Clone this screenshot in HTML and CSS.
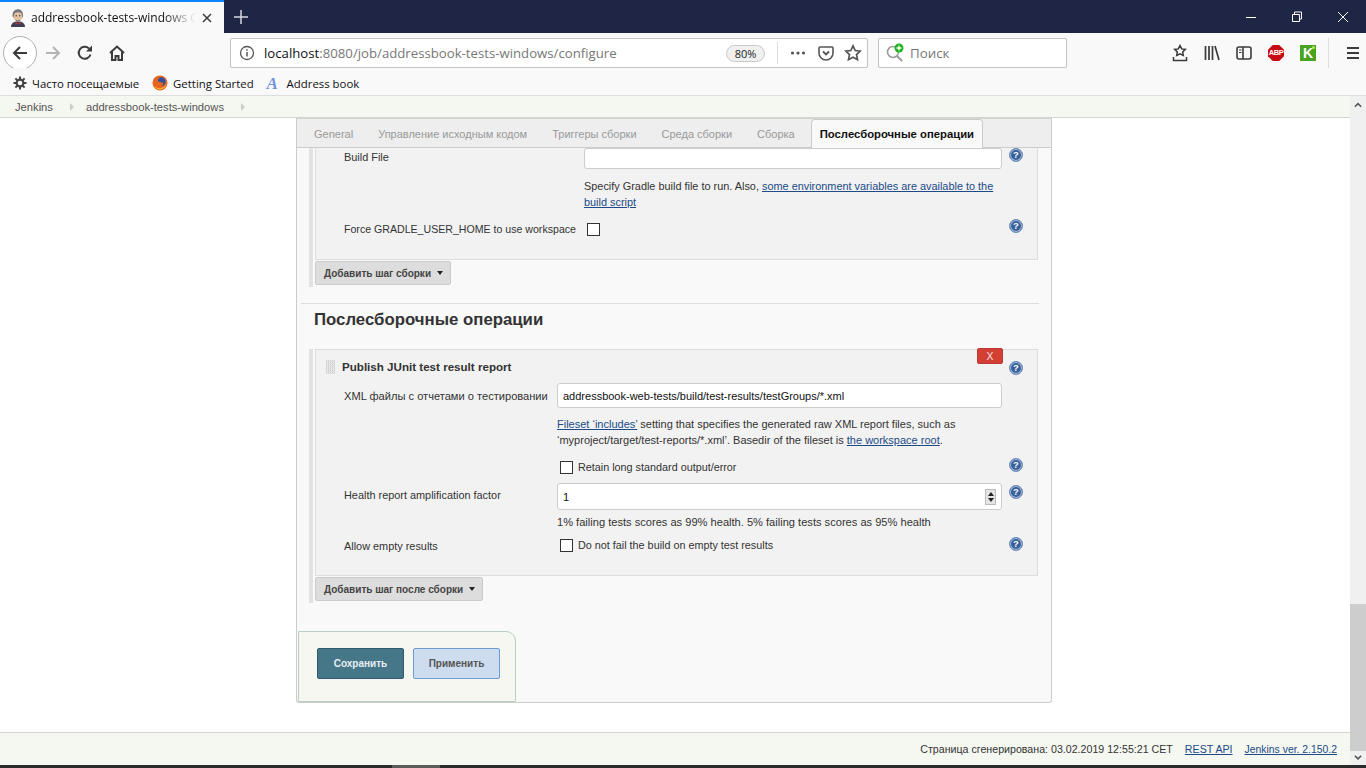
FILE: index.html
```html
<!DOCTYPE html>
<html>
<head>
  <meta charset="utf-8">
  <title>addressbook-tests-windows Config</title>
  <link rel="stylesheet" href="styles.css">
</head>
<body>
  <!-- browser window -->
  <div class="tabstrip">
    <div class="tab">
      <svg class="favicon" width="16" height="18" viewBox="0 0 16 18"><path d="M1 18c0-3.500 2.500-5.500 7-5.500s7 2 7 5.500z" fill="#3c3f55"/><path d="M5.500 12.500L8 15l2.500-2.500v3L8 15l-2.500.5z" fill="#c23b35"/><ellipse cx="8" cy="6.500" rx="4.800" ry="6" fill="#e3c1a3"/><path d="M3.200 9C2 6 2.500 2.500 5 1c2-1 4.500-1 6 .2 2 1.600 2.500 5 1.800 7.800-.8-1.500-.8-3.500-1.600-5-1.600-1-4.700-1-6.400 0-.8 1.500-.8 3.500-1.600 5z" fill="#77757a"/><path d="M5.500 10.500c1.600 1 3.400 1 5 0-.3 1.500-1 2.200-2.500 2.200s-2.200-.7-2.500-2.200z" fill="#8d8078"/><circle cx="6.200" cy="6.800" r=".7" fill="#333"/><circle cx="9.800" cy="6.800" r=".7" fill="#333"/></svg>
      <span class="tab-title">addressbook-tests-windows Configuration</span>
      <svg class="tab-close" width="10" height="10" viewBox="0 0 10 10"><path d="M1 1l8 8M9 1L1 9" stroke="#3a3a3a" stroke-width="1.500"/></svg>
    </div>
    <svg class="new-tab" width="14" height="14" viewBox="0 0 14 14"><path d="M7 0v14M0 7h14" stroke="#d7d8df" stroke-width="1.500"/></svg>
    <div class="window-btns">
      <svg width="12" height="12" viewBox="0 0 12 12"><path d="M1 6.500h10" stroke="#fff"/></svg>
      <svg width="12" height="12" viewBox="0 0 12 12"><path d="M3.500 3V1h7v7H8.500M1.500 3.500h7v7h-7z" fill="none" stroke="#fff"/></svg>
      <svg width="12" height="12" viewBox="0 0 12 12"><path d="M1 1l10 10M11 1L1 11" stroke="#fff"/></svg>
    </div>
  </div>

  <div class="toolbar">
    <div class="back-btn">
      <svg width="16" height="16" viewBox="0 0 16 16"><path d="M15 8H2M8 2L2 8l6 6" fill="none" stroke="#3b3b3b" stroke-width="2"/></svg>
    </div>
    <div class="tool-btn fwd">
      <svg width="16" height="16" viewBox="0 0 16 16"><path d="M1 8h13M8 2l6 6-6 6" fill="none" stroke="#b4b4b4" stroke-width="2"/></svg>
    </div>
    <div class="tool-btn">
      <svg width="16" height="16" viewBox="0 0 16 16"><path d="M13.500 9.500A6 6 0 1 1 12 3.500" fill="none" stroke="#3b3b3b" stroke-width="2"/><path d="M9 6.500h6v-6z" fill="#3b3b3b"/></svg>
    </div>
    <div class="tool-btn">
      <svg width="16" height="16" viewBox="0 0 16 16"><path d="M1 8l7-6.500L15 8M3 7v8h3.500v-4h3v4H13V7" fill="none" stroke="#3b3b3b" stroke-width="2"/></svg>
    </div>
    <div class="urlbar">
      <svg width="16" height="16" viewBox="0 0 16 16"><circle cx="8" cy="8" r="6.500" fill="none" stroke="#555" stroke-width="1.300"/><path d="M8 7v4.500M8 4.200v1.600" stroke="#555" stroke-width="1.500"/></svg>
      <span class="url"><b>localhost</b>:8080/job/addressbook-tests-windows/configure</span>
      <span class="zoom-pill">80%</span>
      <span class="url-sep"></span>
      <svg width="16" height="16" viewBox="0 0 16 16"><circle cx="2.500" cy="8" r="1.600" fill="#555"/><circle cx="8" cy="8" r="1.600" fill="#555"/><circle cx="13.500" cy="8" r="1.600" fill="#555"/></svg>
      <svg width="16" height="16" viewBox="0 0 16 16"><path d="M2 2h12a1 1 0 0 1 1 1v5a7 7 0 0 1-14 0V3a1 1 0 0 1 1-1z" fill="none" stroke="#555" stroke-width="1.600"/><path d="M5 6.500l3 3 3-3" fill="none" stroke="#555" stroke-width="1.800"/></svg>
      <svg width="18" height="18" viewBox="0 0 18 18"><path d="M9 1.800l2.200 4.700 5 .6-3.700 3.500 1 5.100L9 13.200l-4.500 2.500 1-5.100L1.800 7.100l5-.6z" fill="none" stroke="#555" stroke-width="1.700"/></svg>
    </div>
    <div class="searchbar">
      <svg width="22" height="20" viewBox="0 0 22 20"><circle cx="8" cy="9" r="5.500" fill="none" stroke="#999" stroke-width="1.500"/><path d="M12 13l5 5" stroke="#999" stroke-width="1.800"/><circle cx="14" cy="5" r="4.500" fill="#1fb31f"/><path d="M14 2.500v5M11.500 5h5" stroke="#fff" stroke-width="1.300"/></svg>
      <span>Поиск</span>
    </div>
    <div class="right-tools">
      <svg width="16" height="18" viewBox="0 0 16 18"><path d="M8 1.500l1.700 3.400 3.600.5-2.600 2.500.6 3.600L8 9.800l-3.300 1.700.6-3.600-2.600-2.500 3.600-.5z" fill="none" stroke="#3b3b3b" stroke-width="1.500"/><path d="M1.500 13v3.500h13V13" fill="none" stroke="#3b3b3b" stroke-width="1.500"/></svg>
      <svg width="16" height="16" viewBox="0 0 16 16"><path d="M1.500 1v14M5 1v14M8.500 1v14M11 1l4 14" stroke="#3b3b3b" stroke-width="1.700" fill="none"/></svg>
      <svg width="16" height="16" viewBox="0 0 16 16"><rect x="1" y="2" width="14" height="12" rx="2" fill="none" stroke="#3b3b3b" stroke-width="1.600"/><path d="M7 2v12" stroke="#3b3b3b" stroke-width="1.600"/><path d="M3 5h2.500M3 7.500h2.500" stroke="#3b3b3b"/></svg>
      <span class="abp">ABP</span>
      <span class="ext-green">K</span>
      <span class="tools-sep"></span>
      <svg class="burger" width="14" height="14" viewBox="0 0 14 14"><path d="M1 2h12M1 7h12M1 12h12" stroke="#3b3b3b" stroke-width="1.800"/></svg>
    </div>
  </div>

  <div class="bookmarks">
    <span class="bookmark">
      <svg width="14" height="14" viewBox="0 0 14 14"><circle cx="7" cy="7" r="3.400" fill="none" stroke="#444" stroke-width="2.200"/><path d="M7 .5v2.500M7 11v2.500M.5 7H3M11 7h2.500M2.400 2.400l1.800 1.800M9.800 9.800l1.800 1.800M11.600 2.400L9.800 4.200M4.200 9.800l-1.800 1.800" stroke="#444" stroke-width="2"/></svg>
      Часто посещаемые
    </span>
    <span class="bookmark">
      <svg width="16" height="16" viewBox="0 0 16 16"><circle cx="8" cy="8" r="7.500" fill="#e8651c"/><circle cx="9" cy="6.800" r="4.600" fill="#2f4fa3"/><path d="M.8 8C1 4 3 2 4.500 1.500L4 4c1.500-1.500 3.500-1.500 4.500-1C6 3.500 5.500 5 6 6c1 1.500 3.500 1 5 1.500 1 2-1 4.500-3.500 4.500C4 12 2 10 1.500 7z" fill="#e8651c"/><path d="M1.500 11c2 3.500 7 4.500 10 2.500 2-1.300 3-3.500 3-5.500-1 3-3.500 5-6.500 5-2.500 0-5-.5-6.500-2z" fill="#f9b233"/></svg>
      Getting Started
    </span>
    <span class="bookmark">
      <span class="book-a">A</span>
      Address book
    </span>
  </div>

  <div class="page">
    <div class="page-main">
      <div class="breadcrumbs">
        <a>Jenkins</a>
        <span class="crumb-arrow"></span>
        <a>addressbook-tests-windows</a>
        <span class="crumb-arrow"></span>
      </div>

      <div class="canvas">
        <div class="panel">
          <div class="config-tabs">
            <a>General</a>
            <a>Управление исходным кодом</a>
            <a>Триггеры сборки</a>
            <a>Среда сборки</a>
            <a>Сборка</a>
            <a class="active">Послесборочные операции</a>
          </div>

          <div class="section">
            <div class="block block-build">
              <div class="row row-buildfile">
                <label>Build File</label>
                <input class="text-input" type="text">
                <span class="help">?</span>
              </div>
              <div class="row row-desc-gradle">
                <span></span>
                <div class="desc">Specify Gradle build file to run. Also, <a href="#">some environment variables are available to the build script</a></div>
              </div>
              <div class="row row-force">
                <label>Force GRADLE_USER_HOME to use workspace</label>
                <span class="check-line"><span class="checkbox"></span></span>
                <span class="help">?</span>
              </div>
            </div>
            <div class="add-btn">Добавить шаг сборки <i class="caret"></i></div>
          </div>

          <hr class="divider">
          <h2>Послесборочные операции</h2>

          <div class="section">
            <div class="block block-post">
              <button class="delete-btn">X</button>
              <div class="row row-title">
                <div class="step-title"><span class="grip"></span>Publish JUnit test result report</div>
                <span></span>
                <span class="help">?</span>
              </div>
              <div class="row row-xml">
                <label>XML файлы с отчетами о тестировании</label>
                <input class="text-input" type="text" value="addressbook-web-tests/build/test-results/testGroups/*.xml">
                <span></span>
              </div>
              <div class="row row-desc-files">
                <span></span>
                <div class="desc"><a href="#">Fileset ‘includes’</a> setting that specifies the generated raw XML report files, such as ‘myproject/target/test-reports/*.xml’. Basedir of the fileset is <a href="#">the workspace root</a>.</div>
              </div>
              <div class="row row-retain">
                <span></span>
                <span class="check-line"><span class="checkbox"></span>Retain long standard output/error</span>
                <span class="help">?</span>
              </div>
              <div class="row row-health">
                <label>Health report amplification factor</label>
                <div class="number-input">
                  <input type="text" value="1">
                  <span class="spinner"><i class="up"></i><i class="down"></i></span>
                </div>
                <span class="help">?</span>
              </div>
              <div class="row row-desc-health">
                <span></span>
                <div class="desc">1% failing tests scores as 99% health. 5% failing tests scores as 95% health</div>
              </div>
              <div class="row row-empty">
                <label>Allow empty results</label>
                <span class="check-line"><span class="checkbox"></span>Do not fail the build on empty test results</span>
                <span class="help">?</span>
              </div>
            </div>
            <div class="add-btn">Добавить шаг после сборки <i class="caret"></i></div>
          </div>

          <div class="save-bar">
            <button class="btn-save">Сохранить</button>
            <button class="btn-apply">Применить</button>
          </div>
        </div>
      </div>

      <div class="footer">
        <span>Страница сгенерирована: 03.02.2019 12:55:21 CET</span>
        <a href="#">REST API</a>
        <a class="version" href="#">Jenkins ver. 2.150.2</a>
      </div>
    </div>

    <div class="scrollbar">
      <svg width="10" height="7" viewBox="0 0 10 7"><path d="M1 6l4-4 4 4" fill="none" stroke="#555" stroke-width="2"/></svg>
      <div class="scroll-track"><div class="scroll-thumb"></div></div>
      <svg width="10" height="7" viewBox="0 0 10 7"><path d="M1 1l4 4 4-4" fill="none" stroke="#555" stroke-width="2"/></svg>
    </div>
  </div>
  <div class="bottom-strip"><span></span></div>
</body>
</html>
```

FILE: styles.css
```css
* {
  box-sizing: border-box;
}

html, body {
  margin: 0;
  height: 768px;
  overflow: hidden;
}

body {
  display: flex;
  flex-direction: column;
  font-family: "Liberation Sans", Arial, sans-serif;
  font-size: 10.9px;
  color: #333;
  background: #fff;
}

a {
  color: #204a87;
}

/* browser window */
.tabstrip {
  height: 33px;
  flex: none;
  display: flex;
  align-items: center;
  background: #1f2544;
}

.tab {
  width: 224px;
  height: 33px;
  display: flex;
  align-items: center;
  padding-left: 10px;
  background: #f9f9fa;
  border-top: 2px solid #0a84ff;
  font-family: "Open Sans", sans-serif;
  font-size: 12px;
  color: #111;
}

.favicon {
  flex: none;
}

.tab-title {
  width: 165px;
  margin-left: 5px;
  overflow: hidden;
  white-space: nowrap;
  -webkit-mask-image: linear-gradient(to right, #000 80%, transparent);
  mask-image: linear-gradient(to right, #000 80%, transparent);
}

.tab-close {
  margin-left: 6px;
}

.new-tab {
  margin-left: 10px;
}

.window-btns {
  margin-left: auto;
  width: 104px;
  margin-right: 17px;
  display: flex;
  justify-content: space-between;
}

.toolbar {
  height: 35px;
  flex: none;
  display: flex;
  align-items: center;
  padding: 5px 0 0 3px;
  background: #f9f9fa;
}

.back-btn {
  width: 34px;
  height: 34px;
  flex: none;
  display: flex;
  align-items: center;
  justify-content: center;
  background: #fff;
  border: 1px solid #b1b1b1;
  border-radius: 50%;
}

.tool-btn {
  width: 32px;
  flex: none;
  display: flex;
  justify-content: center;
}

.urlbar {
  width: 638px;
  height: 30px;
  margin-left: 97px;
  flex: none;
  display: flex;
  align-items: center;
  padding: 0 5px 0 8px;
  background: #fff;
  border: 1px solid #c4c4c4;
  border-radius: 2px;
  box-shadow: 0 1px 1px rgba(0, 0, 0, 0.1);
}

.url {
  margin-left: 9px;
  font-family: "Open Sans", sans-serif;
  font-size: 13.2px;
  color: #777;
  white-space: nowrap;
}

.url b {
  font-weight: normal;
  color: #111;
}

.zoom-pill {
  margin-left: auto;
  width: 39px;
  height: 17px;
  text-align: center;
  font-family: "Open Sans", sans-serif;
  font-size: 11px;
  line-height: 15px;
  color: #222;
  background: #f0f0f0;
  border: 1px solid #c9c9c9;
  border-radius: 9px;
}

.url-sep {
  width: 1px;
  height: 22px;
  margin: 0 12px;
  background: #ddd;
}

.urlbar svg + svg {
  margin-left: 12px;
}

.urlbar > svg:last-child {
  margin-left: 10px;
}

.searchbar {
  width: 189px;
  height: 30px;
  margin-left: 10px;
  flex: none;
  display: flex;
  align-items: center;
  padding-left: 6px;
  background: #fff;
  border: 1px solid #c4c4c4;
  border-radius: 2px;
  box-shadow: 0 1px 1px rgba(0, 0, 0, 0.1);
  font-family: "Open Sans", sans-serif;
  font-size: 13.3px;
  color: #777;
}

.searchbar span {
  margin-left: 3px;
}

.right-tools {
  flex: 1;
  display: flex;
  align-items: center;
  padding-left: 105px;
  gap: 16px;
}

.abp {
  width: 16px;
  height: 16px;
  flex: none;
  clip-path: polygon(30% 0, 70% 0, 100% 30%, 100% 70%, 70% 100%, 30% 100%, 0 70%, 0 30%);
  background: #c70d13;
  color: #fff;
  font-size: 7.500px;
  font-weight: bold;
  line-height: 16px;
  text-align: center;
  letter-spacing: -0.4px;
}

.ext-green {
  position: relative;
  width: 16px;
  height: 16px;
  flex: none;
  background: #4aa31f;
  color: #fff;
  font-size: 14px;
  font-weight: bold;
  line-height: 17px;
  text-align: center;
}

.ext-green::after {
  content: "";
  position: absolute;
  top: 1px;
  right: 1px;
  width: 3px;
  height: 3px;
  border-radius: 50%;
  background: #a8f05a;
}

.tools-sep {
  width: 1px;
  height: 30px;
  margin-left: -4px;
  background: #ddd;
}

.burger {
  margin-left: 1px;
}

.bookmarks {
  height: 27px;
  flex: none;
  display: flex;
  align-items: center;
  padding: 3px 0 0 13px;
  gap: 13px;
  background: #f9f9fa;
  font-family: "Open Sans", sans-serif;
  font-size: 11.400px;
  color: #111;
}

.bookmark {
  display: flex;
  align-items: center;
  gap: 5px;
}

.book-a {
  width: 15px;
  font-family: "Liberation Serif", serif;
  font-size: 17px;
  line-height: 17px;
  font-style: italic;
  font-weight: bold;
  color: #6f95d8;
}

/* jenkins page */
.page {
  flex: 1;
  min-height: 0;
  display: flex;
  border-top: 1px solid #ddd;
}

.page-main {
  flex: 1;
  display: flex;
  flex-direction: column;
}

.breadcrumbs {
  height: 22px;
  flex: none;
  display: flex;
  align-items: center;
  padding-left: 15px;
  font-size: 11.200px;
  background: #f5f8f1;
  border-bottom: 1px solid #d3d7cf;
}

.breadcrumbs a {
  color: #555;
}

.crumb-arrow {
  width: 0;
  height: 0;
  margin: 0 12px 0 17px;
  border-left: 4px solid #ccc;
  border-top: 4px solid transparent;
  border-bottom: 4px solid transparent;
}

.canvas {
  flex: 1;
}

.panel {
  width: 756px;
  height: 585px;
  margin-left: 296px;
  background: #f9f9f9;
  border: 1px solid #ccc;
  border-top-color: #d3d7cf;
  border-radius: 0 0 3px 3px;
}

.config-tabs {
  height: 29px;
  display: flex;
  align-items: center;
  padding: 1px 0 0 17px;
  font-size: 11px;
  background: #eee;
  border-bottom: 1px solid #ccc;
}

.config-tabs a {
  margin-right: 25px;
  color: #999;
}

.config-tabs a.active {
  height: 29px;
  margin: -1px 0 0 -9px;
  padding: 0 8px;
  font-size: 11.300px;
  line-height: 29px;
  font-weight: bold;
  color: #111;
  background: #f9f9f9;
  border: 1px solid #ccc;
  border-bottom: none;
  border-radius: 4px 4px 0 0;
}

.section {
  margin-left: 12px;
  padding: 0 0 2px 2px;
  border-left: 4px solid #e2e2e2;
}

.block {
  position: relative;
  width: 723px;
  background: #f2f2f2;
  border: 1px solid #ddd;
}

.block-build {
  height: 112px;
  border-top: none;
}

.block-post {
  height: 227px;
}

.row {
  display: grid;
  padding-left: 28px;
  align-items: center;
}

.block-build .row {
  grid-template-columns: 240px 418px 28px;
}

.block-post .row {
  grid-template-columns: 213px 445px 28px;
}

.help {
  width: 14px;
  height: 14px;
  margin-left: 7px;
  border-radius: 50%;
  background: #38609b;
  border: 1px solid #6f8fbe;
  box-shadow: inset 0 0 0 1px #a9bcd8;
  color: #fff;
  font-size: 9.500px;
  font-weight: bold;
  line-height: 12px;
  text-align: center;
}

.text-input {
  width: 100%;
  height: 100%;
  padding: 0 5px;
  font-family: "Liberation Sans", Arial, sans-serif;
  font-size: 11px;
  color: #111;
  background: #fff;
  border: 1px solid #ccc;
  border-radius: 3px;
  outline: none;
}

.row-buildfile {
  height: 21px;
  align-items: start;
}

.row-buildfile label {
  margin-top: 3px;
}

.row-buildfile .help {
  margin-top: 0;
}

.desc {
  line-height: 16px;
}

.row-desc-gradle {
  margin-top: 9px;
}

.row-force {
  height: 18px;
  margin-top: 10px;
}

.row-force label {
  font-size: 10.600px;
}

.row-force .help {
  margin-top: -6px;
}

.row-xml label {
  font-size: 11.100px;
}

.check-line {
  display: flex;
  align-items: center;
  padding-left: 3px;
  font-size: 10.800px;
}

.checkbox {
  width: 13px;
  height: 13px;
  flex: none;
  margin-right: 5px;
  background: #fff;
  border: 1px solid #333;
}

.add-btn {
  display: inline-flex;
  align-items: center;
  height: 24px;
  margin-top: 1px;
  padding: 0 7px 0 8px;
  font-size: 10px;
  font-weight: bold;
  color: #444;
  background: #ddd;
  border: 1px solid #ccc;
  border-radius: 2px;
}

.caret {
  width: 0;
  height: 0;
  margin-left: 6px;
  border-top: 4px solid #222;
  border-left: 3px solid transparent;
  border-right: 3px solid transparent;
}

.divider {
  width: 738px;
  height: 1px;
  margin: 16px 0 0 4px;
  background: #ddd;
  border: none;
}

h2 {
  height: 32px;
  margin: 0 0 13px;
  padding-left: 17px;
  font-size: 16.800px;
  line-height: 32px;
  color: #333;
}

.delete-btn {
  position: absolute;
  top: -2px;
  right: 34px;
  width: 26px;
  height: 16px;
  padding: 0;
  font-family: "Liberation Sans", Arial, sans-serif;
  font-size: 10.400px;
  color: #fbe3e0;
  background: #d33f33;
  border: 1px solid #b83a30;
  border-radius: 2px;
}

.row-title {
  height: 33px;
  padding-left: 10px;
}

.block-post .row-title {
  grid-template-columns: 231px 445px 28px;
}

.row-title .help {
  margin-top: 2px;
}

.step-title {
  display: flex;
  align-items: center;
  font-size: 11.600px;
  font-weight: bold;
  white-space: nowrap;
}

.grip {
  width: 9px;
  height: 14px;
  margin-right: 7px;
  background: repeating-linear-gradient(0deg, #ddd 0 1px, transparent 1px 2px), repeating-linear-gradient(90deg, #ccc 0 1px, transparent 1px 2px);
}

.row-xml {
  height: 25px;
}

.row-desc-files {
  margin-top: 8px;
  font-size: 11px;
}

.row-retain {
  height: 18px;
  margin-top: 10px;
}

.row-retain .help {
  margin-top: -4px;
}

.row-health {
  height: 27px;
  margin-top: 7px;
}

.row-health label {
  margin-top: -3px;
}

.row-health .help {
  margin-top: -9px;
}

.number-input {
  height: 27px;
  display: flex;
  align-items: center;
  padding-right: 5px;
  background: #fff;
  border: 1px solid #ccc;
  border-radius: 3px;
}

.number-input input {
  flex: 1;
  padding: 0 5px;
  font-family: "Liberation Sans", Arial, sans-serif;
  font-size: 11px;
  color: #111;
  border: none;
  outline: none;
}

.spinner {
  width: 11px;
  height: 16px;
  display: flex;
  flex-direction: column;
  align-items: center;
  justify-content: space-evenly;
  background: #e4e4e4;
  border: 1px solid #bbb;
}

.spinner i {
  width: 0;
  height: 0;
  border-left: 3px solid transparent;
  border-right: 3px solid transparent;
}

.spinner .up {
  border-bottom: 4px solid #222;
}

.spinner .down {
  border-top: 4px solid #222;
}

.row-desc-health {
  margin-top: 4px;
  font-size: 11.100px;
}

.row-empty {
  height: 18px;
  margin-top: 7px;
}

.row-empty .check-line {
  margin-top: -2px;
}

.row-empty .help {
  margin-top: -5px;
}

.save-bar {
  width: 218px;
  height: 71px;
  margin: 28px 0 0 1px;
  display: flex;
  align-items: flex-start;
  gap: 9px;
  padding: 16px 0 0 18px;
  background: #f6f7f0;
  border: 1px solid #b8cfc2;
  border-radius: 0 10px 0 0;
}

.save-bar button {
  width: 87px;
  height: 31px;
  font-family: "Liberation Sans", Arial, sans-serif;
  font-size: 10px;
  font-weight: bold;
  border-radius: 2px;
}

.btn-save {
  color: #e6eef2;
  background: #467789;
  border: 1px solid #315a6a;
}

.btn-apply {
  color: #555;
  background: #cddcee;
  border: 1px solid #6d9bd3;
}

.footer {
  height: 33px;
  flex: none;
  display: flex;
  align-items: center;
  justify-content: flex-end;
  gap: 12px;
  padding-right: 13px;
  font-size: 10.650px;
  background: #f5f8f1;
  border-top: 1px solid #d3d7cf;
}

.footer .version {
  font-size: 10.400px;
}

.scrollbar {
  width: 16px;
  flex: none;
  display: flex;
  flex-direction: column;
  align-items: center;
  padding: 6px 0 5px;
  background: #f0f0f0;
}

.scroll-track {
  flex: 1;
  width: 16px;
  margin: 4px 0;
  padding-top: 492px;
}

.scroll-thumb {
  height: 147px;
  background: #cdcdcd;
}

.bottom-strip {
  height: 3px;
  flex: none;
  padding-left: 392px;
  background: #2b2b2b;
}

.bottom-strip span {
  display: block;
  width: 48px;
  height: 3px;
  background: #5c5c5c;
}
```
